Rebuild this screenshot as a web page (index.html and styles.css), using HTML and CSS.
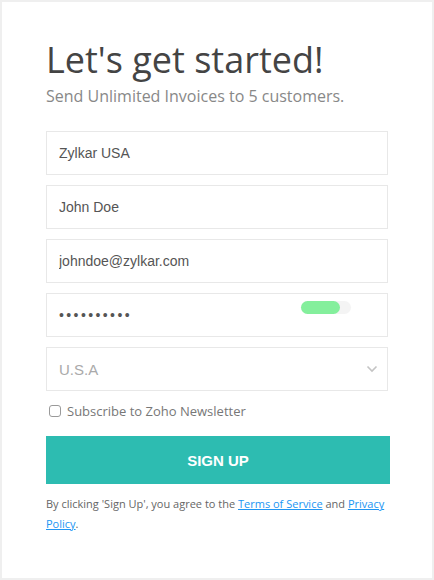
FILE: index.html
```html
<!DOCTYPE html>
<html lang="en">

<head>
  <meta charset="UTF-8">
  <meta name="viewport" content="width=device-width, initial-scale=1.0">
  <title>Sign up</title>

  <link rel="stylesheet" href="styles.css">
</head>

<body>
  <div class="signup-card">
    <h1 class="signup-title">Let's get started!</h1>
    <p class="signup-sub">Send Unlimited Invoices to 5 customers.</p>

    <form class="signup-form">
      <input type="text" class="field" value="Zylkar USA">
      <input type="text" class="field" value="John Doe">
      <input type="email" class="field" value="johndoe@zylkar.com">
      <div class="field-wrap">
        <input type="password" class="field field-pass" value="zylkar2024">
        <span class="strength"><span class="strength-bar"></span></span>
      </div>
      <div class="field-wrap">
        <select class="field field-select">
          <option>U.S.A</option>
        </select>
        <svg class="chevron" width="12" height="8" viewBox="0 0 12 8">
          <path d="M1.5 1.5 L6 6 L10.5 1.5" fill="none" stroke="#c4c4c4" stroke-width="1.6" />
        </svg>
      </div>

      <label class="newsletter">
        <input type="checkbox" class="check">
        <span>Subscribe to Zoho Newsletter</span>
      </label>

      <button type="button" class="signup-btn">SIGN UP</button>

      <p class="terms">
        By clicking 'Sign Up', you agree to the <a href="#">Terms of Service</a> and <a href="#">Privacy Policy</a>.
      </p>
    </form>
  </div>
</body>

</html>
```

FILE: styles.css
```css
html, body {
  margin: 0;
  background: #efefef;
}

.signup-card {
  box-sizing: border-box;
  height: 576px;
  margin: 2px;
  padding: 36px 44px 0 44px;
  background: #fff;
  font-family: "Open Sans", sans-serif;
}

.signup-title {
  margin: 0;
  font-size: 36px;
  line-height: 44px;
  font-weight: 400;
  color: #444;
}

.signup-sub {
  margin: 3px 0 0 0;
  font-size: 16px;
  line-height: 22px;
  color: #888;
}

.signup-form {
  display: flex;
  flex-direction: column;
  gap: 10px;
  margin-top: 24px;
  width: 342px;
}

.field {
  box-sizing: border-box;
  width: 342px;
  height: 44px;
  margin: 0;
  padding: 0 12px;
  border: 1px solid #e8e8e8;
  border-radius: 0;
  background: #fff;
  font-family: "Liberation Sans", Arial, sans-serif;
  font-size: 14px;
  color: #555;
  outline: none;
}

.field-wrap {
  position: relative;
}

.field-pass {
  font-size: 14px;
  letter-spacing: 2.4px;
  color: #555;
}

.strength {
  position: absolute;
  top: 8px;
  left: 255px;
  width: 50px;
  height: 13px;
  border-radius: 7px;
  background: #f4f4f4;
}

.strength-bar {
  display: block;
  width: 39px;
  height: 13px;
  border-radius: 7px;
  background: #84ef9c;
}

.field-select {
  appearance: none;
  -webkit-appearance: none;
  font-size: 15px;
  color: #aaa;
}

.chevron {
  position: absolute;
  top: 18px;
  right: 10px;
}

.newsletter {
  display: flex;
  align-items: center;
  gap: 6px;
  margin-top: 1px;
  padding-left: 3px;
  font-size: 13px;
  color: #777;
}

.check {
  appearance: none;
  -webkit-appearance: none;
  box-sizing: border-box;
  width: 12px;
  height: 12px;
  margin: 0;
  border: 1px solid #9a9a9a;
  border-radius: 3px;
  background: #fff;
}

.signup-btn {
  width: 344px;
  height: 48px;
  margin-top: 6px;
  border: none;
  background: #2dbcb1;
  color: #fff;
  font-family: "Liberation Sans", Arial, sans-serif;
  font-weight: 700;
  font-size: 15px;
  cursor: pointer;
}

.terms {
  margin: 0;
  font-size: 11px;
  line-height: 20px;
  color: #666;
}

.terms a {
  color: #2196f3;
}
```
